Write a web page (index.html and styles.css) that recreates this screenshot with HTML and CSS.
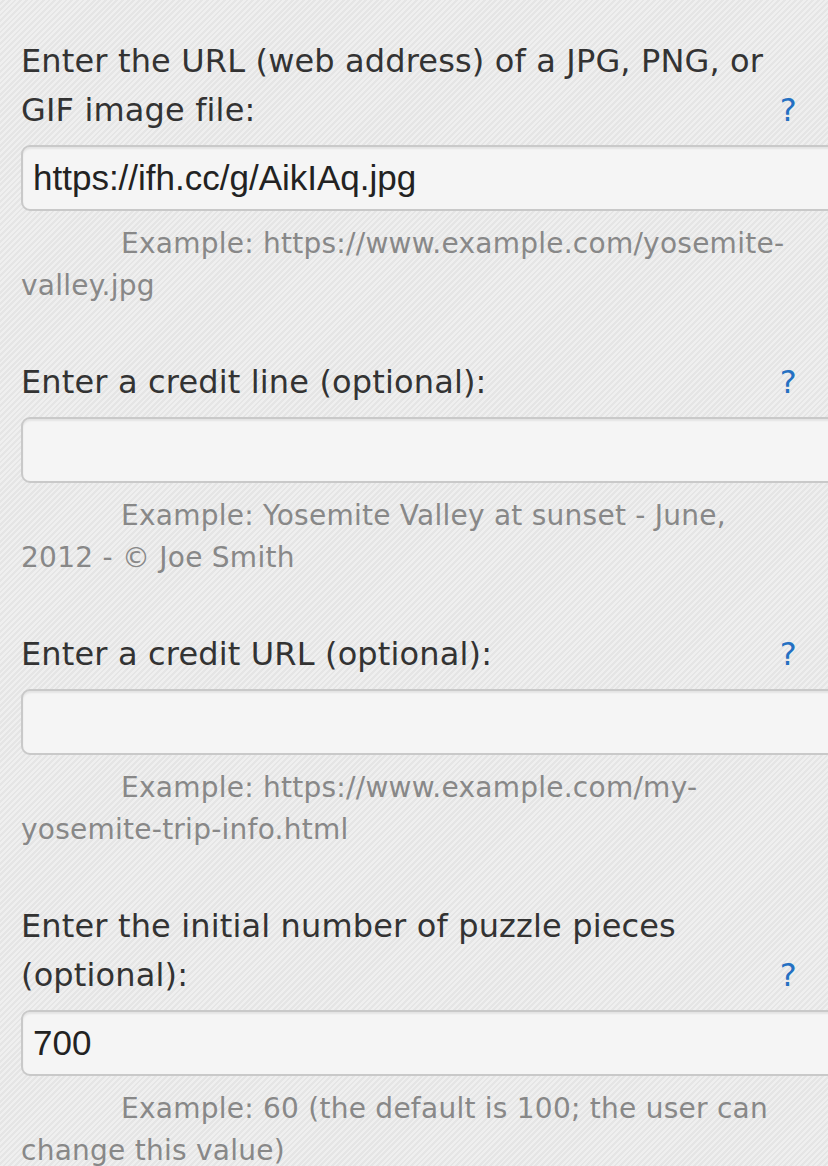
FILE: index.html
```html
<!DOCTYPE html>
<html>
<head>
    <title>Puzzle Settings</title>
    <link rel="stylesheet" href="styles.css">
</head>
<body>
    <div id="puzzle-form">
        <div class="field">
            <label class="prompt" for="image-url">Enter the URL (web address) of a JPG, PNG, or GIF image file: <a class="help" href="#">?</a></label>
            <input class="text-input" id="image-url" type="text" value="https://ifh.cc/g/AikIAq.jpg">
            <div class="example">Example: https://www.example.com/yosemite-valley.jpg</div>
        </div>
        <div class="field">
            <label class="prompt" for="credit-line">Enter a credit line (optional): <a class="help" href="#">?</a></label>
            <input class="text-input" id="credit-line" type="text" value="">
            <div class="example">Example: Yosemite Valley at sunset - June, 2012 - &copy; Joe Smith</div>
        </div>
        <div class="field">
            <label class="prompt" for="credit-url">Enter a credit URL (optional): <a class="help" href="#">?</a></label>
            <input class="text-input" id="credit-url" type="text" value="">
            <div class="example">Example: https://www.example.com/my-yosemite-trip-info.html</div>
        </div>
        <div class="field">
            <label class="prompt" for="piece-count">Enter the initial number of puzzle pieces (optional): <a class="help" href="#">?</a></label>
            <input class="text-input" id="piece-count" type="text" value="700">
            <div class="example">Example: 60 (the default is 100; the user can change this value)</div>
        </div>
    </div>
</body>
</html>
```

FILE: styles.css
```css
html, body {
    margin: 0;
    padding: 0;
}

body {
    font-family: "DejaVu Sans", Verdana, sans-serif;
    color: #333;
    background-color: #ebebeb;
    background-image: repeating-linear-gradient(135deg, #efefef 0, #efefef 2px, #e5e5e5 2px, #e5e5e5 4px);
    overflow: hidden;
    height: 1166px;
}

#puzzle-form {
    padding: 37px 31px 0 21px;
}

.field {
    margin-bottom: 51px;
}

.prompt {
    display: block;
    font-size: 32px;
    line-height: 49px;
    letter-spacing: 0.15px;
}

.help {
    float: right;
    color: #2470c2;
    text-decoration: none;
}

.text-input {
    display: block;
    box-sizing: border-box;
    width: 840px;
    height: 66px;
    margin: 10px 0 0 0;
    padding: 0 10px;
    font-family: "Liberation Sans", Arial, sans-serif;
    font-size: 35px;
    color: #222;
    background-color: #f5f5f5;
    border: 2px solid #c9c9c9;
    border-radius: 9px;
    box-shadow: inset 0 2px 2px rgba(0, 0, 0, 0.07);
    outline: none;
}

.example {
    margin-top: 12px;
    font-size: 28px;
    line-height: 42px;
    letter-spacing: 0.25px;
    text-indent: 100px;
    color: #888;
}
```
